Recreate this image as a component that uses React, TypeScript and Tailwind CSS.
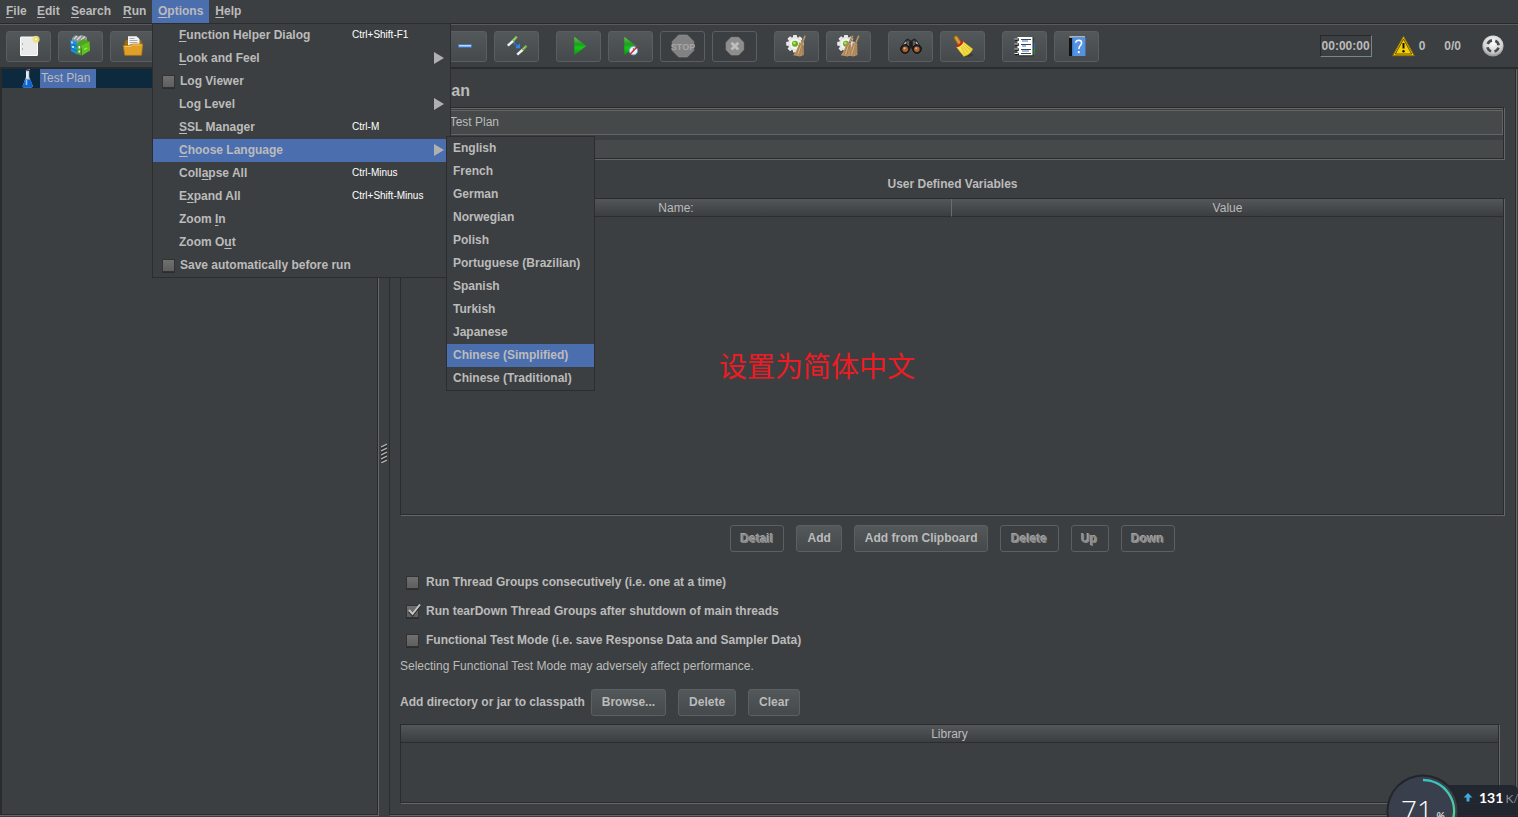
import type { ReactNode } from 'react';

/* ---------- toolbar icons (24 x 24) ---------- */

function Icon({ children }: { children?: ReactNode }) {
  return (
    <svg className="shrink-0" width="24" height="24" viewBox="0 0 24 24" aria-hidden="true">
      {children}
    </svg>
  );
}

function Gear({ cx, cy }: { cx: number; cy: number }) {
  const teeth = [0, 45, 90, 135, 180, 225, 270, 315];
  return (
    <g transform={`translate(${cx} ${cy})`}>
      {teeth.map((a) => (
        <rect key={a} x="-2" y="-8.8" width="4" height="4.5" rx="0.8" fill="#ececec" transform={`rotate(${a})`} />
      ))}
      <circle r="7" fill="#e2e2e2" />
      <circle r="5.5" fill="#f2f2f2" />
      <circle r="3" fill="#5fae12" />
      <circle cx="-0.6" cy="-0.8" r="1.5" fill="#a4e05a" />
    </g>
  );
}

function StrawBroom({ dx }: { dx: number }) {
  return (
    <g transform={`translate(${dx} 0)`}>
      <path d="M17 9.5 20.3 1.4" stroke="#8a6a45" strokeWidth="2.2" />
      <path d="M17.4 8.5 20 2" stroke="#d0b088" strokeWidth="0.8" />
      <path d="M14.2 8.3 18.6 9.6 18.8 21 15 22.6 8.2 21.2C11.5 17.5 13 13 14.2 8.3z" fill="#b99366" />
      <path d="M15.5 10 11.5 20.5M16.5 10.5 14.5 21.5M17.6 11 17.2 21" stroke="#94703f" strokeWidth="0.6" fill="none" />
      <path d="M16 11 13 20" stroke="#dcbb90" strokeWidth="0.7" />
    </g>
  );
}

const NewIcon = (
  <Icon>
    <rect x="3.500" y="3" width="17" height="18.500" rx="0.500" fill="#e9e9e9" stroke="#fbfbfb" strokeWidth="1" />
    <path d="M5.500 9.500v1M5.500 14.500v1" stroke="#777" />
    <circle cx="19" cy="5.300" r="3.600" fill="#efe27c" opacity="0.850" />
    <circle cx="19" cy="5.300" r="1.700" fill="#fffbd8" stroke="#e6d54f" strokeWidth="0.900" />
  </Icon>
);

const TemplatesIcon = (
  <Icon>
    <path d="M3 4 6 1.300 10 2 13 1 18 3V13L10 15 3 10z" fill="#8d9496" />
    <path d="M5 5 8 2M8 6 12 2M12 6 16 2.500" stroke="#d5dadb" strokeWidth="1.200" />
    <path d="M1.300 5.500 8 8V20.500L2 17z" fill="#1d8fe0" />
    <path d="M1.500 9.500 8 12.500M2 14 8 17" stroke="#0c5f9f" strokeWidth="0.800" />
    <path d="M3 7.500v2M4 12v2" stroke="#fff" strokeWidth="1.300" />
    <path d="M8 9.500 12.500 11.500V21.500L8 20z" fill="#49a81a" />
    <path d="M8 9.500 14 5 20.500 7.500 13 11.500z" fill="#4fa51b" />
    <path d="M13 11.500 20.500 7.500 21 16.500 13 21.500z" fill="#5cc41c" />
    <path d="M10.300 12v2.500M10.300 16.500v2" stroke="#f2fbef" strokeWidth="1.600" />
    <path d="M15 15.500 18 14" stroke="#a8ec6e" strokeWidth="1.200" />
  </Icon>
);

const OpenIcon = (
  <Icon>
    <path d="M3.500 8 5 6h15l1 2v12H3.500z" fill="#9c6a10" />
    <path d="M7 2.300h8.500L18.500 5V13H7z" fill="#f4f4f4" />
    <path d="M8.500 4.500h5M8.500 6.500h8M8.500 8.500h8M8.500 10.500h8" stroke="#999" strokeWidth="0.800" />
    <path d="M2.300 11.500h6.700l2-1.500h10.800l-1.300 11.300H3.800z" fill="#e0a027" stroke="#b37a12" strokeWidth="0.700" />
    <path d="M3.500 12.500h6l2-1.500h9" stroke="#f6cf74" strokeWidth="0.800" fill="none" />
  </Icon>
);

const SaveIcon = (
  <Icon>
    <rect x="3" y="3" width="18" height="18" rx="1.500" fill="#5d7da8" />
    <rect x="7" y="3" width="10" height="7" fill="#e6e6e6" />
  </Icon>
);

const CutIcon = (
  <Icon>
    <path d="M7 3 15 17M17 3 9 17" stroke="#ccc" strokeWidth="1.500" />
  </Icon>
);

const CopyIcon = (
  <Icon>
    <rect x="4" y="3" width="11" height="14" fill="#ddd" />
    <rect x="9" y="7" width="11" height="14" fill="#f3f3f3" />
  </Icon>
);

const PasteIcon = (
  <Icon>
    <rect x="4" y="4" width="15" height="18" fill="#a87b3e" />
    <rect x="8" y="8" width="12" height="14" fill="#f3f3f3" />
  </Icon>
);

const PlusIcon = (
  <Icon>
    <path d="M5 12h14M12 5v14" stroke="#8dbdf2" strokeWidth="3" />
  </Icon>
);

const MinusIcon = (
  <Icon>
    <rect x="5.500" y="10.500" width="13" height="2.600" fill="#bcd8f7" stroke="#3f78c4" strokeWidth="1" />
  </Icon>
);

const ToggleIcon = (
  <Icon>
    <path d="M2.800 11.700 8.500 6.500" stroke="#f2f2f2" strokeWidth="2.400" />
    <path d="M8 7 11.800 2.500" stroke="#7dbb4a" strokeWidth="2.600" />
    <path d="M8.500 6 11 3.500" stroke="#c8ecaa" strokeWidth="0.800" />
    <path d="M12.200 20.700 18 15.500" stroke="#f2f2f2" strokeWidth="2.400" />
    <path d="M17.500 16 21.500 11.700" stroke="#6fa545" strokeWidth="2.600" />
    <path d="M18.200 14.800 20.500 12.700" stroke="#c8ecaa" strokeWidth="0.800" />
    <path d="M8.700 8.700 13 12.600" stroke="#2f7be0" strokeWidth="1.600" strokeDasharray="2 1" />
    <path d="M15 9.300V14.200h-5z" fill="#2f86f0" />
  </Icon>
);

const Defs = (
  <svg width="0" height="0" className="absolute" aria-hidden="true">
    <defs>
      <linearGradient id="play" x1="0" y1="0" x2="0" y2="1">
        <stop offset="0" stopColor="#62c552" />
        <stop offset="0.4" stopColor="#1f9c1f" />
        <stop offset="0.6" stopColor="#14c814" />
        <stop offset="1" stopColor="#0d920d" />
      </linearGradient>
      <linearGradient id="yellow" x1="0" y1="0" x2="1" y2="1">
        <stop offset="0" stopColor="#fbf06a" />
        <stop offset="1" stopColor="#ecd02a" />
      </linearGradient>
      <radialGradient id="ball" cx="0.5" cy="0.35" r="0.65">
        <stop offset="0" stopColor="#ffffff" />
        <stop offset="0.7" stopColor="#cfcfcf" />
        <stop offset="1" stopColor="#8c8c8c" />
      </radialGradient>
      <linearGradient id="arc" x1="0" y1="0" x2="0" y2="1">
        <stop offset="0" stopColor="#35c3c3" />
        <stop offset="1" stopColor="#5fd08a" />
      </linearGradient>
    </defs>
  </svg>
);

const StartIcon = (
  <Icon>
    <path d="M7.300 2.800 19.300 12 7.300 21.200z" fill="url(#play)" />
  </Icon>
);

const StartNoPausesIcon = (
  <Icon>
    <path d="M5.300 2.800 17.300 12 5.300 21.200z" fill="url(#play)" />
    <circle cx="14.400" cy="16.700" r="4.200" fill="#eef3fa" stroke="#6f9fd8" strokeWidth="1" />
    <path d="M14.400 14v2.700" stroke="#667" strokeWidth="0.800" />
    <path d="M10.800 20.500 18.200 12.800" stroke="#d42020" strokeWidth="1.400" />
  </Icon>
);

const StopIcon = (
  <Icon>
    <path d="M7.700 1h8.600L22.800 7.500v9L16.300 23H7.700L1.200 16.500v-9z" fill="#828282" stroke="#919191" strokeWidth="0.600" />
    <text x="12" y="15.500" textAnchor="middle" fontSize="9" fontWeight="bold" fontFamily="Liberation Sans Narrow, Liberation Sans, sans-serif" fill="#a6a6a6">
      STOP
    </text>
  </Icon>
);

const ShutdownIcon = (
  <Icon>
    <path d="M8.200 3.300h7.400L20.700 8.400v7.400L15.600 21H8.200L3.100 15.800V8.400z" fill="#8d8d8d" stroke="#999" strokeWidth="0.600" />
    <path d="M8.500 8.700 15.300 15.500M15.300 8.700 8.500 15.500" stroke="#bdbdbd" strokeWidth="2.800" />
  </Icon>
);

const ClearIcon = (
  <Icon>
    <Gear cx={10} cy={9.7} />
    <StrawBroom dx={0} />
  </Icon>
);

const ClearAllIcon = (
  <Icon>
    <Gear cx={9} cy={9.7} />
    <StrawBroom dx={-4.5} />
    <StrawBroom dx={1.6} />
  </Icon>
);

const SearchIcon = (
  <Icon>
    <path d="M6.500 6.500C8 4.500 10.500 5 11 7h2c.5-2 3-2.500 4.500-.5L22 14H2z" fill="#333536" stroke="#111" strokeWidth="0.800" />
    <path d="M7 8 4 12.500M17 8l3 4.500" stroke="#b5b5b5" strokeWidth="1.400" />
    <path d="M9 7v5M15 7v5" stroke="#8c8c8c" strokeWidth="0.900" />
    <rect x="10.500" y="8" width="3" height="5" fill="#1c1c1c" />
    <circle cx="6" cy="15" r="4.300" fill="#2a2a2a" stroke="#0c0c0c" />
    <circle cx="18" cy="15" r="4.300" fill="#2a2a2a" stroke="#0c0c0c" />
    <circle cx="6.200" cy="15.200" r="2.700" fill="#b5632c" />
    <circle cx="17.800" cy="15.200" r="2.700" fill="#b5632c" />
    <circle cx="5.500" cy="14.300" r="1" fill="#eab489" />
    <circle cx="17.200" cy="14.300" r="1" fill="#eab489" />
  </Icon>
);

const ResetIcon = (
  <Icon>
    <ellipse cx="16" cy="21" rx="6" ry="1.800" fill="#26282a" opacity="0.500" />
    <path d="M5 3.800 8.600 9.600" stroke="#8f5d14" strokeWidth="5" strokeLinecap="round" />
    <path d="M5 3.800 8.400 9" stroke="#d29a3c" strokeWidth="3" strokeLinecap="round" />
    <path d="M5.500 13.200C9 12.500 11 10.500 12 7.500L21.900 15C20 19 17 21.500 12.700 22.500z" fill="url(#yellow)" stroke="#b59412" strokeWidth="0.500" />
    <path d="M10.500 13 14 20.500M11.800 11.800 17 18.500M12.800 10.300 19.500 16" stroke="#c9a91c" strokeWidth="0.600" />
    <path d="M6 12.300C8.500 11.500 10.500 10 11.600 7.200" stroke="#d8201c" strokeWidth="2.200" fill="none" />
  </Icon>
);

const LogIcon = (
  <Icon>
    <rect x="18" y="9" width="3.700" height="6" fill="#2b6fd6" />
    <rect x="18" y="15" width="3.700" height="5.500" fill="#2d9e2d" />
    <rect x="4.500" y="3" width="15.500" height="18.800" fill="#fff" />
    <path d="M20 3v18.800H4.500" stroke="#222" strokeWidth="1" fill="none" />
    <path d="M8 5.500h10M8 10.500h10M8 15.500h10M8 19.500h10" stroke="#444" strokeWidth="1" />
    <path d="M9 7h6M9 12h4M9 17h7" stroke="#3579d8" strokeWidth="1.100" />
    <path d="M2 5.500h4M2 10.500h4M2 15.500h4M2 20h4" stroke="#111" strokeWidth="2.600" />
    <path d="M1.500 5h4M1.500 10h4M1.500 15h4M1.500 19.500h4" stroke="#eee" strokeWidth="1.200" />
  </Icon>
);

const HelpIcon = (
  <Icon>
    <path d="M4 4 7 2v20H4z" fill="#111" />
    <path d="M4.500 3h15.500" stroke="#ddd" strokeWidth="1.400" />
    <rect x="7" y="3.500" width="13.300" height="18.500" fill="#3f7fd2" />
    <rect x="8.500" y="3.500" width="11.800" height="18.500" fill="#5593e2" />
    <path d="M10.800 8.800C10.800 5.500 16.600 5.500 16.600 8.900 16.600 11.500 13.800 11.600 13.800 15" stroke="#fff" strokeWidth="1.500" fill="none" />
    <circle cx="13.800" cy="18.200" r="1.100" fill="#fff" />
  </Icon>
);

/* ---------- shared pieces ---------- */

function ToolButton({ label, icon, disabled = false }: { label: string; icon: ReactNode; disabled?: boolean }) {
  return (
    <button
      type="button"
      aria-label={label}
      disabled={disabled}
      className="flex h-[31px] w-[45px] items-center justify-center rounded-[3px] border border-[#5b5e60] bg-linear-to-b from-[#53585a] to-[#45494b] disabled:bg-none"
    >
      {icon}
    </button>
  );
}

function PushButton({ children, disabled = false }: { children: ReactNode; disabled?: boolean }) {
  return (
    <button
      type="button"
      disabled={disabled}
      className="h-[27px] rounded-[3px] border border-[#5d6062] bg-linear-to-b from-[#53585a] to-[#45494b] px-[10px] pb-0.5 leading-4 font-bold disabled:bg-none disabled:pb-0 disabled:text-[#8a8a8a] disabled:[text-shadow:-1px_-1px_0_#a5a5a5]"
    >
      {children}
    </button>
  );
}

const boxClass =
  'size-[13px] appearance-none border border-[#303234] bg-linear-to-b from-[#707070] to-[#5e5e5e] shadow-[0_1px_0_#2b2d2e]';

function Check({ id, label, checked = false }: { id: string; label: string; checked?: boolean }) {
  return (
    <div className="flex h-[29px] items-center gap-[7px] pl-[6px]">
      <span className="relative flex">
        <input id={id} type="checkbox" defaultChecked={checked} className={boxClass} />
        {checked && (
          <svg className="pointer-events-none absolute -top-0.5 left-0" width="16" height="15" viewBox="0 0 16 15" aria-hidden="true">
            <path d="M3 8.500 6.500 12.500 14 3" stroke="#222" strokeWidth="2" fill="none" />
            <path d="M3 7 6.500 11 14 1.500" stroke="#c4c4c4" strokeWidth="2" fill="none" />
          </svg>
        )}
      </span>
      <label htmlFor={id} className="pb-0.5 font-bold">
        {label}
      </label>
    </div>
  );
}

/* Underlines the mnemonic letter at the given index. */
function Mnemonic({ text, at }: { text: string; at?: number }) {
  if (at === undefined) return <>{text}</>;
  return (
    <span className="whitespace-pre">
      {text.slice(0, at)}
      <u className="underline-offset-2">{text[at]}</u>
      {text.slice(at + 1)}
    </span>
  );
}

type Item = {
  text: string;
  at?: number;
  keys?: string;
  submenu?: boolean;
  check?: boolean;
  active?: boolean;
};

const optionItems: Item[] = [
  { text: 'Function Helper Dialog', at: 0, keys: 'Ctrl+Shift-F1' },
  { text: 'Look and Feel', at: 0, submenu: true },
  { text: 'Log Viewer', check: true },
  { text: 'Log Level', submenu: true },
  { text: 'SSL Manager', at: 0, keys: 'Ctrl-M' },
  { text: 'Choose Language', at: 0, submenu: true, active: true },
  { text: 'Collapse All', at: 4, keys: 'Ctrl-Minus' },
  { text: 'Expand All', at: 1, keys: 'Ctrl+Shift-Minus' },
  { text: 'Zoom In', at: 5 },
  { text: 'Zoom Out', at: 6 },
  { text: 'Save automatically before run', check: true },
];

const languages = [
  'English',
  'French',
  'German',
  'Norwegian',
  'Polish',
  'Portuguese (Brazilian)',
  'Spanish',
  'Turkish',
  'Japanese',
  'Chinese (Simplified)',
  'Chinese (Traditional)',
];

function OptionsMenu() {
  return (
    <div className="absolute top-full left-0 z-20 w-[299px] border border-[#2b2d2e] bg-[#3c3f41] font-bold">
      {optionItems.map((item) =>
        item.check ? (
          <label key={item.text} className="flex h-[23px] items-center gap-[5px] pl-[9px]">
            <input type="checkbox" className={boxClass} />
            <span className="pb-0.5">{item.text}</span>
          </label>
        ) : (
          <button
            key={item.text}
            type="button"
            className={`flex h-[23px] w-full items-center pr-[6px] pb-0.5 pl-[26px] text-left ${item.active ? 'bg-[#4b6eaf]' : ''}`}
          >
            <span className="w-[173px]">
              <Mnemonic text={item.text} at={item.at} />
            </span>
            {item.keys && <span className="text-[10px] font-normal text-white">{item.keys}</span>}
            {item.submenu && (
              <svg className="ml-auto" width="10" height="12" viewBox="0 0 10 12" aria-hidden="true">
                <path d="M0 0 10 6 0 12z" fill="#b0b0b0" />
              </svg>
            )}
          </button>
        ),
      )}
      <div className="absolute top-[112px] left-[293px] w-[149px] border border-[#2b2d2e] bg-[#3c3f41]">
        {languages.map((name) => (
          <button
            key={name}
            type="button"
            className={`block h-[23px] w-full pb-0.5 pl-[6px] text-left ${name === 'Chinese (Simplified)' ? 'bg-[#4b6eaf]' : ''}`}
          >
            {name}
          </button>
        ))}
      </div>
    </div>
  );
}

function MenuBar() {
  const before = [
    { name: 'File', width: 'w-[31px]' },
    { name: 'Edit', width: 'w-[34px]' },
    { name: 'Search', width: 'w-[52px]' },
    { name: 'Run', width: 'w-[35px]' },
  ];
  return (
    <nav className="flex h-6 border-b border-[#28292b] font-bold">
      {before.map(({ name, width }) => (
        <button key={name} type="button" className={`h-[23px] pb-0.5 pl-[6px] text-left ${width}`}>
          <Mnemonic text={name} at={0} />
        </button>
      ))}
      <div className="relative h-[23px]">
        <button type="button" className="h-[23px] bg-[#4b6eaf] px-[6px] pb-0.5">
          <Mnemonic text="Options" at={0} />
        </button>
        <OptionsMenu />
      </div>
      <button type="button" className="h-[23px] px-[6px] pb-0.5">
        <Mnemonic text="Help" at={0} />
      </button>
    </nav>
  );
}

const toolGroups: { label: string; icon: ReactNode; disabled?: boolean }[][] = [
  [
    { label: 'New', icon: NewIcon },
    { label: 'Templates', icon: TemplatesIcon },
    { label: 'Open', icon: OpenIcon },
    { label: 'Save', icon: SaveIcon },
  ],
  [
    { label: 'Cut', icon: CutIcon },
    { label: 'Copy', icon: CopyIcon },
    { label: 'Paste', icon: PasteIcon },
  ],
  [
    { label: 'Expand', icon: PlusIcon },
    { label: 'Collapse', icon: MinusIcon },
    { label: 'Toggle', icon: ToggleIcon },
  ],
  [
    { label: 'Start', icon: StartIcon },
    { label: 'Start no pauses', icon: StartNoPausesIcon },
    { label: 'Stop', icon: StopIcon, disabled: true },
    { label: 'Shutdown', icon: ShutdownIcon, disabled: true },
  ],
  [
    { label: 'Clear', icon: ClearIcon },
    { label: 'Clear all', icon: ClearAllIcon },
  ],
  [
    { label: 'Search tree', icon: SearchIcon },
    { label: 'Reset search', icon: ResetIcon },
  ],
  [
    { label: 'Function helper', icon: LogIcon },
    { label: 'Help', icon: HelpIcon },
  ],
];

function ToolBar() {
  return (
    <header className="flex h-[45px] items-center border-t border-b-2 border-t-[#5a5a5a] border-b-[#292b2d] pr-[14px] pl-[6px]">
      <div className="flex gap-[17px]">
        {toolGroups.map((group) => (
          <div key={group[0].label} className="flex gap-[7px]">
            {group.map((tool) => (
              <ToolButton key={tool.label} {...tool} />
            ))}
          </div>
        ))}
      </div>
      <div className="ml-auto flex items-center font-bold">
        <span className="mr-5 border border-t-[#26282a] border-r-[#7b8486] border-b-[#7b8486] border-l-[#26282a] px-px leading-5">
          00:00:00
        </span>
        <svg width="24" height="22" viewBox="0 0 24 22" aria-hidden="true">
          <path d="M11.500 1.300 22.300 20.700H.7z" fill="#f7cf08" stroke="#8a7200" strokeWidth="1" strokeLinejoin="round" />
          <path d="M11.500 4 19.700 19H3.300z" fill="none" stroke="#3a3200" strokeWidth="0.800" />
          <path d="M11.500 8v5.500" stroke="#111" strokeWidth="2" />
          <circle cx="11.500" cy="16.300" r="1.200" fill="#111" />
        </svg>
        <span className="ml-[3px]">0</span>
        <span className="ml-[19px]">0/0</span>
        <svg className="ml-[21px]" width="22" height="22" viewBox="0 0 22 22" aria-hidden="true">
          <circle cx="11" cy="11" r="10.600" fill="url(#ball)" />
          <circle cx="11" cy="11" r="5.700" fill="none" stroke="#4a4a4a" strokeWidth="2.600" strokeDasharray="5.500 3.450" strokeDashoffset="-1.700" />
        </svg>
      </div>
    </header>
  );
}

const panelBox = 'border border-[#292b2d] shadow-[1px_1px_0_#646667]';
const headCell = 'h-[18px] border-b border-[#2b2d2e] bg-linear-to-b from-[#53575a] to-[#3b3e40] p-0 text-center font-normal';

function TreePane() {
  return (
    <aside className="mb-px w-[379px] border-r border-b border-[#646667] bg-[#292b2d] pr-px pb-px pl-0.5">
      <ul className="h-full bg-[#3c3f41]">
        <li className="flex h-[19px] bg-[#0d293e] pl-5">
          <svg width="14" height="19" viewBox="0 0 14 19" aria-hidden="true">
            <path d="M3.800 1.500 8 .5" stroke="#889" strokeWidth="1" />
            <path d="M4 2h3.200v6L11 17.500 9.500 18.500h-8L.5 17.500 4 8z" fill="#c9d3dc" />
            <path d="M3.200 10.500h5.200L11 17.300 9.500 18.500h-8L.5 17.300z" fill="#0f64d2" />
            <path d="M4.500 11v5" stroke="#8ec4ff" strokeWidth="1.600" />
            <path d="M5 3v6" stroke="#fff" strokeWidth="1.200" />
          </svg>
          <span className="ml-1 bg-[#4b6eaf] pr-[6px] pl-px leading-[18px]">Test Plan</span>
        </li>
      </ul>
    </aside>
  );
}

function PlanPane() {
  return (
    <main className="mr-px mb-px flex min-w-0 flex-1 flex-col border-r border-b border-l border-l-[#292b2d] border-r-[#646667] border-b-[#646667] pt-[10px] pr-[11px] pb-3 pl-[10px] shadow-[inset_-1px_-1px_0_#292b2d]">
      <h1 className="text-base leading-6 font-bold">Test Plan</h1>

      <section className={`mt-1 mr-px flex flex-col gap-[5px] ${panelBox}`}>
        <div className="flex items-center gap-[5px] border-t border-[#646667] pt-px">
          <label htmlFor="plan-name" className="font-bold">
            Name:
          </label>
          <input
            id="plan-name"
            defaultValue="Test Plan"
            className="h-[25px] min-w-0 flex-1 border border-[#646464] bg-[#45494a] px-[6px] pb-0.5 outline-none"
          />
        </div>
        <div className="flex items-center gap-[5px]">
          <label htmlFor="plan-comments" className="leading-[18px] font-bold">
            Comments:
          </label>
          <input id="plan-comments" className="h-[18px] min-w-0 flex-1 bg-[#45494a] outline-none" />
        </div>
      </section>

      <h2 className="mt-[17px] text-center font-bold">User Defined Variables</h2>

      <div className={`mt-[6px] mr-px min-h-[100px] flex-1 ${panelBox}`}>
        <table className="w-full table-fixed border-separate border-spacing-0">
          <thead>
            <tr>
              <th className={`${headCell} border-r border-r-[#6a6d6f]`}>Name:</th>
              <th className={headCell}>Value</th>
            </tr>
          </thead>
        </table>
      </div>

      <div className="mt-[10px] flex justify-center gap-3">
        <PushButton disabled>Detail</PushButton>
        <PushButton>Add</PushButton>
        <PushButton>Add from Clipboard</PushButton>
        <PushButton disabled>Delete</PushButton>
        <PushButton disabled>Up</PushButton>
        <PushButton disabled>Down</PushButton>
      </div>

      <div className="mt-4">
        <Check id="serial" label="Run Thread Groups consecutively (i.e. one at a time)" />
        <Check id="teardown" label="Run tearDown Thread Groups after shutdown of main threads" checked />
        <Check id="functional" label="Functional Test Mode (i.e. save Response Data and Sampler Data)" />
      </div>
      <p className="mt-[3px]">Selecting Functional Test Mode may adversely affect performance.</p>

      <div className="mt-[15px] flex items-center gap-3">
        <span className="-mr-[6px] pb-0.5 font-bold">Add directory or jar to classpath</span>
        <PushButton>Browse...</PushButton>
        <PushButton>Delete</PushButton>
        <PushButton>Clear</PushButton>
      </div>

      <div className={`mt-2 mr-[6px] h-[79px] ${panelBox}`}>
        <table className="w-full table-fixed border-separate border-spacing-0">
          <thead>
            <tr>
              <th className={headCell}>Library</th>
            </tr>
          </thead>
        </table>
      </div>
    </main>
  );
}

/* Floating system monitor, cut off by the lower edge of the window. */
function Monitor() {
  return (
    <div className="pointer-events-none absolute right-0 bottom-0 h-[43px] w-[132px] overflow-hidden text-white">
      <div className="absolute top-[11px] right-0 flex h-8 w-[95px] items-start rounded-tr-md bg-[#1f232c]/90 pt-1 pl-10">
        <svg className="mt-1 shrink-0" width="10" height="9" viewBox="0 0 10 9" aria-hidden="true">
          <path d="M5 0 9.500 4.500H6.500V8.500h-3V4.500H.5z" fill="#3fa9e0" />
        </svg>
        <span className="ml-[6px] font-['Lato'] text-[14px] leading-[17px] font-bold whitespace-nowrap">131</span>
        <span className="ml-0.5 font-['Lato'] text-[12px] leading-5 text-[#8a8f98]">K/s</span>
      </div>
      <svg className="absolute top-0 left-0" width="74" height="74" viewBox="0 0 74 74" aria-hidden="true">
        <circle cx="37" cy="37" r="36.500" fill="#23252c" />
        <circle cx="37" cy="37" r="34.500" fill="#3a3f4d" />
        <path d="M37 6A31 31 0 0 1 66 48" stroke="url(#arc)" strokeWidth="2.400" fill="none" />
      </svg>
      <span className="absolute top-[18px] left-[15px] font-['Open_Sans'] text-[28px] leading-[36px] font-light">71</span>
      <span className="absolute top-[34px] left-[50px] font-['Open_Sans'] text-[11px] leading-4 italic">%</span>
    </div>
  );
}

export default function App() {
  return (
    <div className="relative flex min-h-screen flex-col overflow-hidden bg-[#3c3f41] font-['Liberation_Sans',Arial,sans-serif] text-[12px] leading-4 text-[#bbbbbb]">
      {Defs}
      <MenuBar />
      <ToolBar />
      <div className="flex flex-1">
        <TreePane />
        <div className="flex w-[10px] items-center justify-center pt-5">
          <svg width="6" height="20" viewBox="0 0 6 20" aria-hidden="true">
            <path d="M0 4 6 1M0 8 6 5M0 12 6 9M0 16 6 13M0 20 6 17" stroke="#b0b0b0" strokeWidth="1.300" />
            <path d="M0 6 6 3M0 10 6 7M0 14 6 11M0 18 6 15" stroke="#222" strokeWidth="1" />
          </svg>
        </div>
        <PlanPane />
      </div>
      <p className="absolute top-[345px] left-[719px] font-['Noto_Sans_CJK_SC',sans-serif] text-[28px] leading-10 whitespace-nowrap text-[#ed1c24]">
        设置为简体中文
      </p>
      <Monitor />
    </div>
  );
}
